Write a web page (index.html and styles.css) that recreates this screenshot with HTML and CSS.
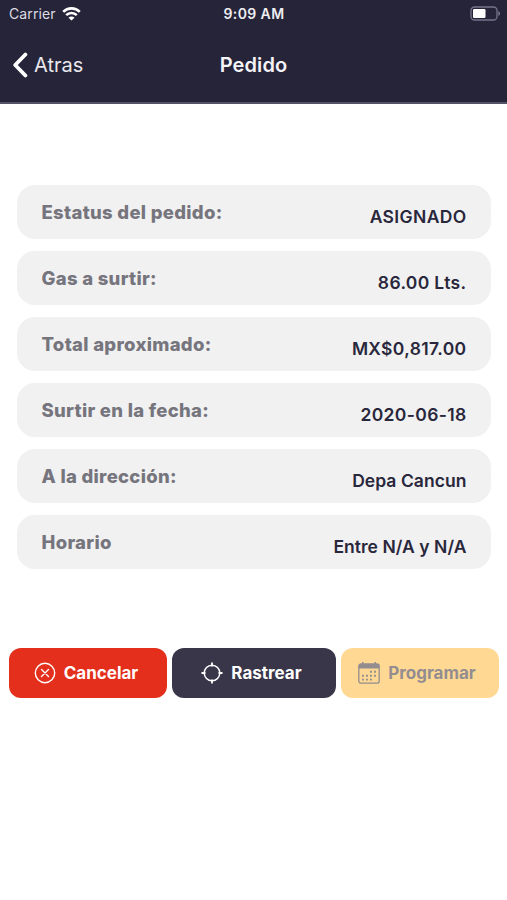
FILE: index.html
```html
<!DOCTYPE html>
<html lang="es">
<head>
    <meta charset="UTF-8">
    <meta name="viewport" content="width=device-width, initial-scale=1.0">
    <title>Pedido</title>
    <link rel="stylesheet" href="styles.css">
</head>
<body>
    <header class="header">
        <div class="status-bar">
            <div class="carrier">
                <span>Carrier</span>
                <svg width="19" height="14" viewBox="0 0 19 14" fill="none" stroke="#fff" stroke-width="2.6">
                    <path d="M1.2 4.8a11.8 11.8 0 0 1 16.6 0"/>
                    <path d="M4.2 8.1a7.6 7.6 0 0 1 10.6 0"/>
                    <path d="M9.5 13.5L6.5 10.7a4.2 4.2 0 0 1 6 0z" fill="#fff" stroke="none"/>
                </svg>
            </div>
            <span class="time">9:09 AM</span>
            <svg class="battery" width="31" height="15" viewBox="0 0 31 15">
                <rect x="1" y="1" width="26" height="13" rx="3.5" fill="none" stroke="#77748a" stroke-width="1.3"/>
                <rect x="3" y="3" width="12.5" height="9" rx="1.2" fill="#fff"/>
                <path d="M28.3 5v5c1.1-.4 1.8-1.3 1.8-2.5s-.7-2.1-1.8-2.5z" fill="#77748a"/>
            </svg>
        </div>
        <nav class="nav-bar">
            <a class="back">
                <svg width="16" height="26" viewBox="0 0 16 26" fill="none" stroke="#fff" stroke-width="3.8" stroke-linecap="round" stroke-linejoin="round">
                    <path d="M13.4 2.5L3.2 13l10.2 10.5"/>
                </svg>
                <span>Atras</span>
            </a>
            <h1 class="title">Pedido</h1>
        </nav>
    </header>

    <main>
        <ul class="details">
            <li class="row"><span class="label">Estatus del pedido:</span><span class="value">ASIGNADO</span></li>
            <li class="row"><span class="label">Gas a surtir:</span><span class="value">86.00 Lts.</span></li>
            <li class="row"><span class="label">Total aproximado:</span><span class="value">MX$0,817.00</span></li>
            <li class="row"><span class="label">Surtir en la fecha:</span><span class="value">2020-06-18</span></li>
            <li class="row"><span class="label">A la dirección:</span><span class="value name">Depa Cancun</span></li>
            <li class="row"><span class="label">Horario</span><span class="value name">Entre N/A y N/A</span></li>
        </ul>

        <div class="actions">
            <button class="btn cancel">
                <svg width="22" height="22" viewBox="0 0 22 22" fill="none" stroke="#fff" stroke-width="1.4" stroke-linecap="round">
                    <circle cx="11" cy="11" r="9.7"/>
                    <path d="M7.5 7.5l7 7M14.5 7.5l-7 7"/>
                </svg>
                <span>Cancelar</span>
            </button>
            <button class="btn track">
                <svg width="22" height="22" viewBox="0 0 22 22" fill="none" stroke="#fff" stroke-width="1.5">
                    <circle cx="11" cy="11" r="7.8"/>
                    <path d="M11 .5v4M11 17.5v4M.5 11h4M17.5 11h4" stroke-width="1.8"/>
                </svg>
                <span>Rastrear</span>
            </button>
            <button class="btn schedule">
                <svg width="22" height="22" viewBox="0 0 22 22" fill="none" stroke="#938d90">
                    <rect x=".8" y="2" width="20.4" height="19.2" rx="2.2" stroke-width="1.3"/>
                    <path d="M.8 6.5V4q0-2 2-2h16.4q2 0 2 2v2.5z" fill="#938d90" stroke="none"/>
                    <path d="M4.8 0v4M17.2 0v4" stroke-width="1.5"/>
                    <path d="M12 9.8h7M4 13.7h15M4 17.6h11" stroke-width="1.9" stroke-dasharray="1.9 2.1"/>
                </svg>
                <span>Programar</span>
            </button>
        </div>
    </main>
</body>
</html>
```

FILE: styles.css
```css
* {
    box-sizing: border-box;
}

body {
    font-family: Inter, "Liberation Sans", sans-serif;
    background-color: #fff;
    margin: 0;
}

svg {
    display: block;
    flex-shrink: 0;
}

.header {
    height: 104px;
    background-color: #262439;
    border-bottom: 2px solid #565267;
    color: #fff;
}

.status-bar,
.nav-bar {
    display: grid;
    grid-template-columns: 1fr auto 1fr;
    align-items: center;
}

.status-bar {
    height: 27px;
    padding: 0 6px 0 9px;
    font-size: 14px;
}

.carrier {
    display: flex;
    align-items: center;
    gap: 6px;
    color: #dddce3;
    letter-spacing: 0.1px;
}

.time {
    font-weight: 600;
    letter-spacing: 0.4px;
    margin-right: 2px;
    color: #eeedf2;
}

.battery {
    justify-self: end;
}

.nav-bar {
    height: 75px;
    padding: 0 12px;
}

.back {
    display: flex;
    align-items: center;
    gap: 6px;
    font-size: 20px;
    color: #e9e8ed;
}

.title {
    grid-column: 2;
    margin: 0;
    font-size: 20px;
    font-weight: 600;
    letter-spacing: 0.1px;
    color: #f4f3f7;
}

.details {
    display: flex;
    flex-direction: column;
    gap: 12px;
    margin: 0;
    padding: 81px 16px 0 17px;
    list-style: none;
}

.row {
    display: flex;
    justify-content: space-between;
    height: 54px;
    padding: 0 24.5px;
    background-color: #f1f1f2;
    border-radius: 18px;
    line-height: 22px;
}

.label {
    padding-top: 16px;
    font-size: 18.5px;
    font-weight: 850;
    letter-spacing: 0.3px;
    color: #76757d;
}

.value {
    padding-top: 21px;
    font-size: 17.5px;
    font-weight: 620;
    letter-spacing: 0.35px;
    color: #29273b;
}

.name {
    letter-spacing: 0.05px;
}

.actions {
    display: grid;
    grid-template-columns: 158px 164px 158px;
    gap: 5px;
    padding: 79px 9px 0;
}

.btn {
    display: flex;
    align-items: center;
    justify-content: center;
    gap: 8px;
    height: 50px;
    padding: 0 5px 0 0;
    border: none;
    border-radius: 12px;
    font-family: inherit;
    font-size: 17px;
    font-weight: 700;
    color: #fff;
}

.cancel {
    padding-right: 4px;
    background-color: #e32f1b;
}

.track {
    background-color: #393649;
}

.schedule {
    padding-right: 6px;
    background-color: #ffd993;
    color: #938d90;
}
```
